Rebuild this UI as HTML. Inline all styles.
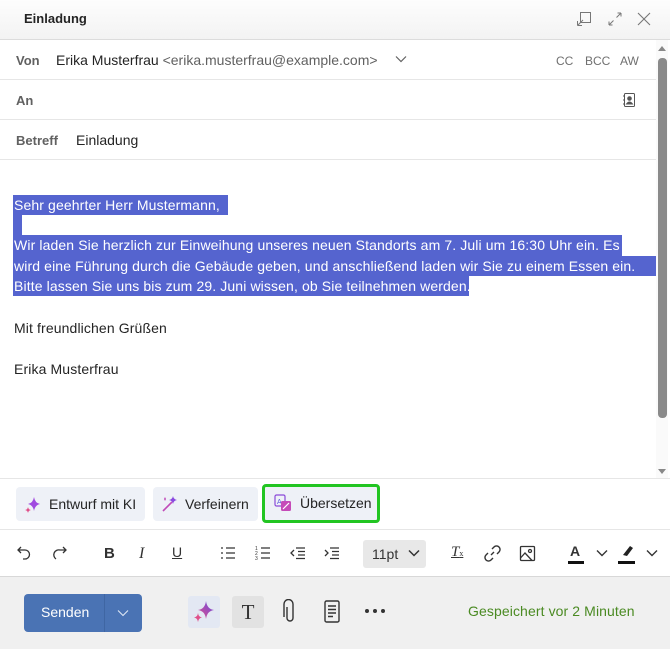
<!DOCTYPE html>
<html><head><meta charset="utf-8"><style>
*{box-sizing:border-box;margin:0;padding:0}
body{width:670px;height:649px;background:#fff;font-family:"Liberation Sans",sans-serif;position:relative;overflow:hidden;color:#242424}
.a{position:absolute;white-space:nowrap}
.hl{position:absolute;background:#5564cf}
.t{position:absolute;white-space:nowrap;font-size:14px;line-height:20px;letter-spacing:.12px}
.line{position:absolute;left:0;width:656px;height:1px;background:#e6e6e6}
.lbl{font-size:13px;font-weight:bold;color:#616161}
.btn{position:absolute;top:487px;height:34px;background:#eef1f7;border-radius:4px;font-size:14px;line-height:34px;color:#242424}
</style></head><body>
<div class="a" style="left:0;top:0;width:670px;height:40px;background:linear-gradient(#fdfdfd,#f3f3f3);border-bottom:1px solid #dcdcdc"></div>
<div class="a" style="left:24px;top:11px;font-size:13px;font-weight:bold;color:#242424">Einladung</div>
<svg class="a" style="left:576px;top:11px" width="16" height="16" viewBox="0 0 16 16" fill="none" stroke="#777" stroke-width="1"><rect x="4.5" y="1.5" width="10" height="10"/><path d="M1.5 14.5 L7 9 M1.5 14.5 V10 M1.5 14.5 H6"/></svg>
<svg class="a" style="left:607px;top:11px" width="16" height="16" viewBox="0 0 16 16" fill="none" stroke="#777" stroke-width="1"><path d="M9.5 6.5 L14 2 M14 2 H10.5 M14 2 V5.5 M6.5 9.5 L2 14 M2 14 H5.5 M2 14 V10.5"/></svg>
<svg class="a" style="left:637px;top:12px" width="14" height="14" viewBox="0 0 14 14" stroke="#777" stroke-width="1.1"><path d="M1 1 L13 13 M13 1 L1 13"/></svg>

<div class="a lbl" style="left:16px;top:53px">Von</div>
<div class="a" style="left:56px;top:52px;font-size:14px">Erika Musterfrau <span style="color:#616161">&lt;erika.musterfrau@example.com&gt;</span></div>
<svg class="a" style="left:395px;top:55px" width="12" height="8" viewBox="0 0 12 8" fill="none" stroke="#616161" stroke-width="1.2"><path d="M1 1.5 L6 6.5 L11 1.5"/></svg>
<div class="a" style="left:556px;top:54px;font-size:12px;color:#707070">CC</div>
<div class="a" style="left:585px;top:54px;font-size:12px;color:#707070">BCC</div>
<div class="a" style="left:620px;top:54px;font-size:12px;color:#707070">AW</div>
<div class="line" style="top:79px"></div>
<div class="a lbl" style="left:16px;top:93px">An</div>
<svg class="a" style="left:622px;top:92px" width="14" height="16" viewBox="0 0 14 16" fill="none" stroke="#555" stroke-width="1"><rect x="2.5" y="1.5" width="10" height="13" rx="1"/><circle cx="7.5" cy="6.5" r="1.8" fill="#555"/><path d="M4.5 12 Q7.5 8 10.5 12Z" fill="#555"/><path d="M1 4H3M1 8H3M1 12H3"/></svg>
<div class="line" style="top:119px"></div>
<div class="a lbl" style="left:16px;top:133px">Betreff</div>
<div class="a" style="left:76px;top:132px;font-size:14px">Einladung</div>
<div class="line" style="top:159px"></div>

<div class="hl" style="left:13px;top:195px;width:215px;height:20px"></div>
<div class="hl" style="left:13px;top:215px;width:9px;height:20px"></div>
<div class="hl" style="left:13px;top:235px;width:609px;height:21px"></div>
<div class="hl" style="left:13px;top:256px;width:645px;height:20px"></div>
<div class="hl" style="left:13px;top:276px;width:456px;height:20px"></div>
<div class="t" style="left:14px;top:195px;color:#fff">Sehr geehrter Herr Mustermann,</div>
<div class="t" style="left:14px;top:235px;color:#fff">Wir laden Sie herzlich zur Einweihung unseres neuen Standorts am 7. Juli um 16:30 Uhr ein. Es</div>
<div class="t" style="left:14px;top:256px;color:#fff">wird eine Führung durch die Gebäude geben, und anschließend laden wir Sie zu einem Essen ein.</div>
<div class="t" style="left:14px;top:276px;color:#fff">Bitte lassen Sie uns bis zum 29. Juni wissen, ob Sie teilnehmen werden.</div>
<div class="t" style="left:14px;top:318px">Mit freundlichen Grüßen</div>
<div class="t" style="left:14px;top:359px">Erika Musterfrau</div>

<div class="a" style="left:656px;top:40px;width:12px;height:438px;background:#fafafa"></div>
<svg class="a" style="left:657px;top:44px" width="10" height="8"><path d="M1 7 L5 2 L9 7Z" fill="#888"/></svg>
<div class="a" style="left:658px;top:58px;width:9px;height:360px;background:#8a8a8a;border-radius:4px"></div>
<svg class="a" style="left:657px;top:468px" width="10" height="8"><path d="M1 1 L5 6 L9 1Z" fill="#888"/></svg>
<div class="line" style="top:478px;width:670px"></div>

<div class="btn" style="left:16px;width:129px"><svg style="position:absolute;left:8px;top:8px" width="18" height="18" viewBox="0 0 18 18"><path d="M10 2 Q11 8 16 9 Q11 10 10 16 Q9 10 4 9 Q9 8 10 2Z" fill="#a04ae0"/><path d="M4 12 Q4.4 14.6 7 15 Q4.4 15.4 4 18 Q3.6 15.4 1 15 Q3.6 14.6 4 12Z" fill="#e0508a"/></svg><span style="position:absolute;left:33px">Entwurf mit KI</span></div>
<div class="btn" style="left:153px;width:105px"><svg style="position:absolute;left:8px;top:8px" width="18" height="18" viewBox="0 0 18 18"><path d="M2 16 L11 7" stroke="#c04ab8" stroke-width="1.6"/><path d="M12 1 Q12.6 4.4 16 5 Q12.6 5.6 12 9 Q11.4 5.6 8 5 Q11.4 4.4 12 1Z" fill="#8a4ae0"/><path d="M4 2 L5 4 L4 6 L3 4Z" fill="#c04ab8"/></svg><span style="position:absolute;left:32px">Verfeinern</span></div>
<div class="btn" style="left:262px;top:484px;width:118px;height:39px;border:3px solid #22c522;line-height:33px"><svg style="position:absolute;left:9px;top:7px" width="18" height="18" viewBox="0 0 18 18"><rect x="1" y="1" width="10" height="11" rx="1.5" fill="none" stroke="#8a4ad8" stroke-width="1.2"/><text x="3" y="10" font-size="7" fill="#5a5ad8" font-family="Liberation Sans">A</text><rect x="7" y="7" width="10" height="10" rx="1.5" fill="#c54ab8"/><path d="M9 15 L15 9" stroke="#fff" stroke-width="1.2"/></svg><span style="position:absolute;left:35px">Übersetzen</span></div>
<div class="line" style="top:529px;width:670px"></div>

<svg class="a" style="left:16px;top:545px" width="16" height="16" viewBox="0 0 16 16" fill="none" stroke="#333" stroke-width="1.3"><path d="M5 2 L2 5 L5 8 M2 5 H9 A4.5 4.5 0 0 1 9 14 H7"/></svg>
<svg class="a" style="left:52px;top:545px" width="16" height="16" viewBox="0 0 16 16" fill="none" stroke="#333" stroke-width="1.3"><path d="M11 2 L14 5 L11 8 M14 5 H8 A5 5 0 0 0 4 14"/></svg>
<div class="a" style="left:104px;top:545px;font-size:15px;font-weight:bold;color:#333">B</div>
<div class="a" style="left:139px;top:545px;font-size:16px;font-style:italic;font-family:'Liberation Serif',serif;color:#333">I</div>
<div class="a" style="left:172px;top:544px;font-size:14px;color:#333;text-decoration:underline">U</div>
<svg class="a" style="left:220px;top:546px" width="16" height="14" viewBox="0 0 16 14" stroke="#333" stroke-width="1.3"><path d="M1 2H3M1 7H3M1 12H3M6 2H15M6 7H15M6 12H15"/></svg>
<svg class="a" style="left:255px;top:545px" width="16" height="16" viewBox="0 0 16 16" stroke="#333" stroke-width="1.3"><path d="M6 3H15M6 8H15M6 13H15"/><text x="0" y="5" font-size="5" fill="#333" stroke="none">1</text><text x="0" y="10" font-size="5" fill="#333" stroke="none">2</text><text x="0" y="15" font-size="5" fill="#333" stroke="none">3</text></svg>
<svg class="a" style="left:290px;top:546px" width="16" height="14" viewBox="0 0 16 14" stroke="#333" stroke-width="1.3" fill="none"><path d="M6 2H15M8 5.5H15M8 9H15M6 12.5H15M4 4 L1 7 L4 10"/></svg>
<svg class="a" style="left:324px;top:546px" width="16" height="14" viewBox="0 0 16 14" stroke="#333" stroke-width="1.3" fill="none"><path d="M6 2H15M8 5.5H15M8 9H15M6 12.5H15M1 4 L4 7 L1 10"/></svg>
<div class="a" style="left:363px;top:540px;width:63px;height:28px;background:#e8e8e8;border-radius:3px;font-size:14px;line-height:28px;padding-left:9px;color:#333">11pt</div>
<svg class="a" style="left:408px;top:549px" width="12" height="8" viewBox="0 0 12 8" fill="none" stroke="#333" stroke-width="1.5"><path d="M1 1.5 L6 6.5 L11 1.5"/></svg>
<div class="a" style="left:451px;top:544px;font-size:15px;font-style:italic;font-family:'Liberation Serif',serif;color:#333;text-decoration:underline">T<span style="font-size:8px;font-style:normal;text-decoration:none">x</span></div>
<svg class="a" style="left:484px;top:545px" width="17" height="17" viewBox="0 0 17 17" fill="none" stroke="#333" stroke-width="1.4"><path d="M7 10 L10 7 M8 4 L10 2 A3 3 0 0 1 15 7 L13 9 M9 13 L7 15 A3 3 0 0 1 2 10 L4 8"/></svg>
<svg class="a" style="left:519px;top:545px" width="17" height="17" viewBox="0 0 17 17" fill="none" stroke="#333" stroke-width="1.3"><rect x="1.5" y="1.5" width="14" height="14" rx="1"/><circle cx="11" cy="6" r="1.5"/><path d="M1.5 13 L6 8 L13 15.5"/></svg>
<div class="a" style="left:570px;top:543px;font-size:14px;color:#333;font-weight:bold">A</div>
<div class="a" style="left:568px;top:561px;width:16px;height:3px;background:#111"></div>
<svg class="a" style="left:596px;top:549px" width="12" height="8" viewBox="0 0 12 8" fill="none" stroke="#333" stroke-width="1.4"><path d="M1 1.5 L6 6.5 L11 1.5"/></svg>
<svg class="a" style="left:619px;top:544px" width="16" height="14" viewBox="0 0 16 14"><path d="M4 11 L11 2 L14 4 L8 12Z M3 12 L5 11" fill="#222"/></svg>
<div class="a" style="left:618px;top:561px;width:17px;height:3px;background:#111"></div>
<svg class="a" style="left:646px;top:549px" width="12" height="8" viewBox="0 0 12 8" fill="none" stroke="#333" stroke-width="1.4"><path d="M1 1.5 L6 6.5 L11 1.5"/></svg>

<div class="a" style="left:0;top:576px;width:670px;height:73px;background:#f0f0f0;border-top:1px solid #d8d8d8"></div>
<div class="a" style="left:24px;top:594px;width:118px;height:38px;background:#4a73b4;border-radius:4px"></div>
<div class="a" style="left:104px;top:594px;width:1px;height:38px;background:#3f66a3"></div>
<div class="a" style="left:41px;top:604px;font-size:14px;color:#fff">Senden</div>
<svg class="a" style="left:117px;top:609px" width="12" height="8" viewBox="0 0 12 8" fill="none" stroke="#dfe8f5" stroke-width="1.1"><path d="M1 1.5 L6 6.5 L11 1.5"/></svg>
<div class="a" style="left:188px;top:596px;width:32px;height:32px;background:#e3e8f3;border-radius:3px"></div>
<svg class="a" style="left:192px;top:599px" width="24" height="26" viewBox="0 0 24 26"><defs><linearGradient id="g" x1="0" y1="1" x2="1" y2="0"><stop offset="0" stop-color="#e0508a"/><stop offset="1" stop-color="#6a4ae0"/></linearGradient></defs><path d="M14 2 Q15 10 22 11 Q15 12 14 20 Q13 12 6 11 Q13 10 14 2Z" fill="url(#g)"/><path d="M6 14 Q6.5 18 10 18.5 Q6.5 19 6 23 Q5.5 19 2 18.5 Q5.5 18 6 14Z" fill="#e0508a"/></svg>
<div class="a" style="left:232px;top:596px;width:32px;height:32px;background:#e2e2e2;border-radius:3px;font-family:'Liberation Serif',serif;font-size:21px;line-height:32px;text-align:center;color:#333">T</div>
<svg class="a" style="left:282px;top:599px" width="16" height="26" viewBox="0 0 16 26" fill="none" stroke="#333" stroke-width="1.4"><path d="M5 8 V19 A3 3 0 0 0 11 19 V5 A4.5 4.5 0 0 0 2 5 V18"/></svg>
<svg class="a" style="left:323px;top:599px" width="18" height="26" viewBox="0 0 18 26" fill="none" stroke="#333" stroke-width="1.4"><rect x="2" y="2" width="14" height="21" rx="1.5"/><path d="M5 7H13M5 10.5H13M5 14H13M5 17.5H10"/></svg>
<svg class="a" style="left:364px;top:608px" width="22" height="6"><circle cx="3" cy="3" r="2" fill="#333"/><circle cx="11" cy="3" r="2" fill="#333"/><circle cx="19" cy="3" r="2" fill="#333"/></svg>
<div class="a" style="left:468px;top:603px;font-size:14px;color:#4a8a22;letter-spacing:.1px">Gespeichert vor 2 Minuten</div>
</body></html>
